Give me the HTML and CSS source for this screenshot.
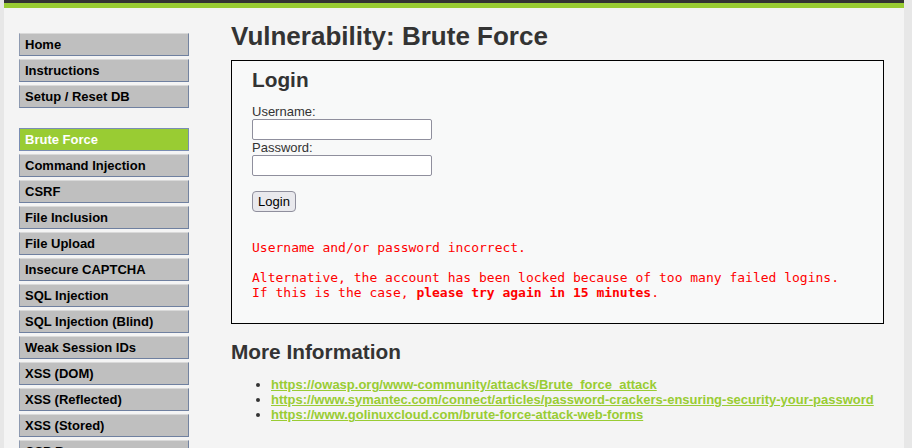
FILE: index.html
```html
<!DOCTYPE html>
<html lang="en">
<head>
<meta charset="utf-8">
<title>Vulnerability: Brute Force</title>
<link rel="stylesheet" href="styles.css">
</head>
<body>
<div class="container">
  <div class="topbar"></div>
  <div class="greenbar"></div>
  <div class="layout">
    <nav class="menu">
      <ul class="menu-group">
        <li><a href="#">Home</a></li>
        <li><a href="#">Instructions</a></li>
        <li><a href="#">Setup / Reset DB</a></li>
      </ul>
      <ul class="menu-group">
        <li><a class="active" href="#">Brute Force</a></li>
        <li><a href="#">Command Injection</a></li>
        <li><a href="#">CSRF</a></li>
        <li><a href="#">File Inclusion</a></li>
        <li><a href="#">File Upload</a></li>
        <li><a href="#">Insecure CAPTCHA</a></li>
        <li><a href="#">SQL Injection</a></li>
        <li><a href="#">SQL Injection (Blind)</a></li>
        <li><a href="#">Weak Session IDs</a></li>
        <li><a href="#">XSS (DOM)</a></li>
        <li><a href="#">XSS (Reflected)</a></li>
        <li><a href="#">XSS (Stored)</a></li>
        <li><a href="#">CSP Bypass</a></li>
        <li><a href="#">JavaScript</a></li>
      </ul>
    </nav>
    <main class="main">
      <h1 class="title">Vulnerability: Brute Force</h1>
      <div class="vuln-box">
        <h3 class="box-title">Login</h3>
        <form class="login-form" action="#" method="get">
          <label class="field-label">Username:</label>
          <input class="field" type="text" name="username">
          <label class="field-label">Password:</label>
          <input class="field" type="password" name="password">
          <button class="login-btn" type="button">Login</button>
        </form>
        <pre class="error"><br>Username and/or password incorrect.<br><br>Alternative, the account has been locked because of too many failed logins.<br>If this is the case, <em>please try again in 15 minutes</em>.</pre>
      </div>
      <h2 class="more-title">More Information</h2>
      <ul class="links">
        <li><a href="#">https://owasp.org/www-community/attacks/Brute_force_attack</a></li>
        <li><a href="#">https://www.symantec.com/connect/articles/password-crackers-ensuring-security-your-password</a></li>
        <li><a href="#">https://www.golinuxcloud.com/brute-force-attack-web-forms</a></li>
      </ul>
    </main>
  </div>
</div>
</body>
</html>
```
FILE: styles.css
```css
html, body {
  margin: 0;
  padding: 0;
}
body {
  background: #e7e7e7;
  font-family: "Liberation Sans", Arial, sans-serif;
  font-size: 13px;
  color: #000;
}
.container {
  width: 900px;
  margin-left: 4px;
  min-height: 700px;
  background: #f4f4f4;
}
.topbar {
  height: 3px;
  background: #333333;
}
.greenbar {
  height: 5px;
  background: #99cc33;
}
.layout {
  display: flex;
  gap: 42px;
  padding: 0 20px 0 15px;
}
.menu {
  width: 170px;
  flex: none;
  padding-top: 25px;
  display: flex;
  flex-direction: column;
  gap: 20px;
}
.menu-group {
  list-style: none;
  margin: 0;
  padding: 0;
  display: flex;
  flex-direction: column;
  gap: 3px;
}
.menu-group a {
  display: block;
  height: 15px;
  line-height: 15px;
  padding: 3px 5px;
  background: #bfbfbf;
  color: #000;
  font-weight: bold;
  text-decoration: none;
  border: 1px solid;
  border-color: #d9d9d9 #7383a0 #6f80a0 #8e9ab0;
}
.menu-group a.active {
  background: #99cc33;
  color: #fff;
  border-color: #7a8db3;
}
.main {
  flex: 1;
  padding-top: 13px;
  color: #333;
}
.title {
  margin: 0 0 9px;
  font-size: 26px;
  line-height: 30px;
  font-weight: bold;
  color: #333;
}
.vuln-box {
  border: 1px solid #000;
  background: #f8f9f9;
  padding: 7px 20px 10px;
}
.box-title {
  margin: 0 0 12px;
  font-size: 20.8px;
  line-height: 24px;
  font-weight: bold;
  color: #333;
}
.login-form {
  display: flex;
  flex-direction: column;
  align-items: flex-start;
}
.field-label {
  line-height: 15px;
  height: 15px;
  color: #333;
}
.field {
  box-sizing: border-box;
  width: 180px;
  height: 21px;
  margin: 0;
  border: 1px solid #8f8f9d;
  border-radius: 2px;
  background: #fff;
  padding: 1px 2px;
  font-family: "Liberation Sans", Arial, sans-serif;
  font-size: 13px;
}
.login-btn {
  box-sizing: border-box;
  margin-top: 15px;
  width: 44px;
  height: 21px;
  padding: 0;
  border: 1px solid #8f8f9d;
  border-radius: 4px;
  background: #e9e9ed;
  color: #000;
  font-family: "Liberation Sans", Arial, sans-serif;
  font-size: 13px;
}
.error {
  margin: 13px 0;
  font-family: "DejaVu Sans Mono", monospace;
  font-size: 13px;
  line-height: 15px;
  color: #ff0000;
}
.error em {
  font-style: normal;
  font-weight: bold;
}
.more-title {
  margin: 16px 0 13px;
  font-size: 20.8px;
  line-height: 24px;
  font-weight: bold;
  color: #333;
}
.links {
  margin: 0;
  padding-left: 40px;
  line-height: 15.2px;
}
.links a {
  color: #99cc33;
  font-weight: bold;
  text-decoration: underline;
}
```
